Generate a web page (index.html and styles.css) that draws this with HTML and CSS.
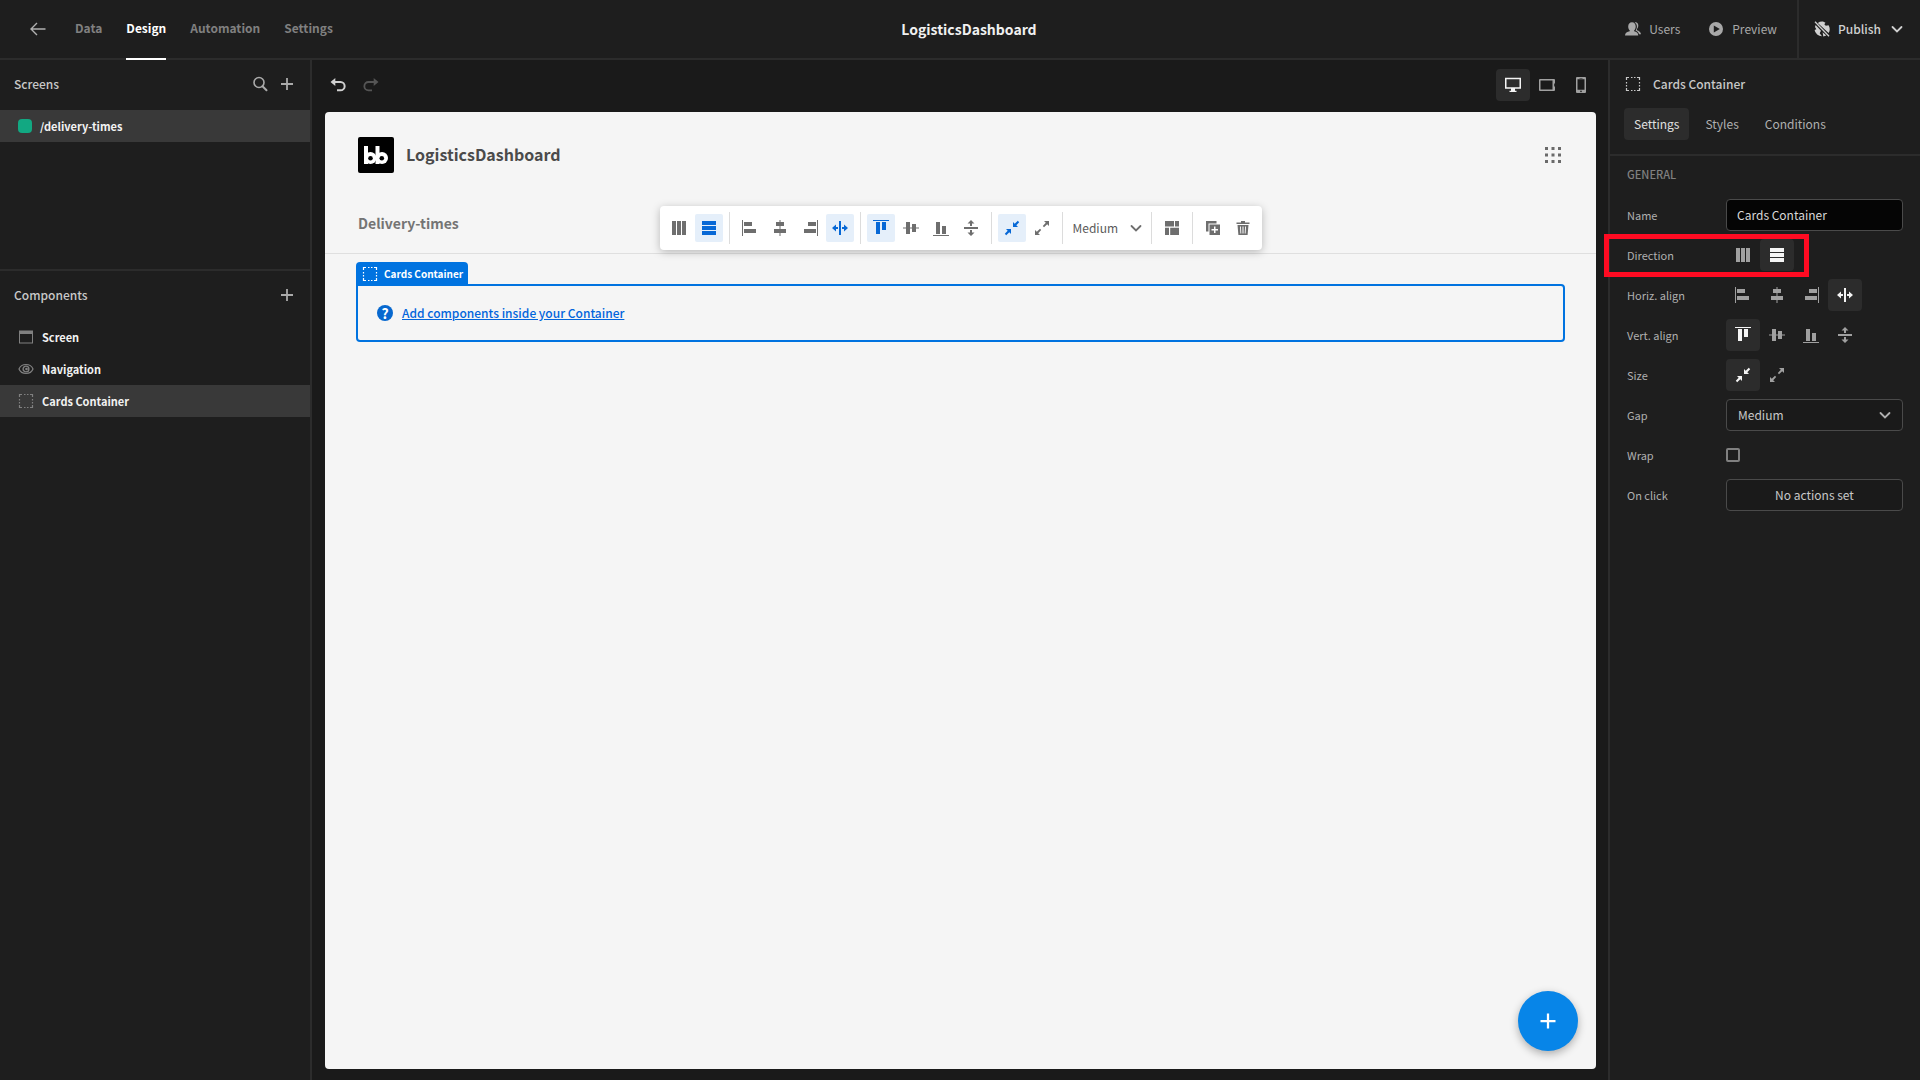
FILE: index.html
```html
<!DOCTYPE html>
<html lang="en">
<head>
<meta charset="utf-8">
<title>LogisticsDashboard</title>
<link rel="stylesheet" href="styles.css">
</head>
<body>
<svg class="sprite" aria-hidden="true">
  <symbol id="i-back" viewBox="0 0 16 16"><path d="M15.500 8H1.500M7 2 1 8l6 6" fill="none" stroke="currentColor" stroke-width="1.400"/></symbol>
  <symbol id="i-search" viewBox="0 0 16 16"><circle cx="7" cy="6.500" r="5" fill="none" stroke="currentColor" stroke-width="1.600"/><path d="m10.500 10.300 4 4" stroke="currentColor" stroke-width="2" stroke-linecap="round"/></symbol>
  <symbol id="i-plus" viewBox="0 0 16 16"><path d="M8 2v12M2 8h12" stroke="currentColor" stroke-width="1.800"/></symbol>
  <symbol id="i-screen" viewBox="0 0 16 16"><path d="M1 1.500h14v13H1zM2 5v8.500h12V5z" fill="currentColor" fill-rule="evenodd"/></symbol>
  <symbol id="i-eye" viewBox="0 0 16 16"><path d="M8 3.500C4.500 3.500 1.800 6 1 8c.8 2 3.500 4.500 7 4.500S14.200 10 15 8c-.8-2-3.500-4.500-7-4.500z" fill="none" stroke="currentColor" stroke-width="1.200"/><circle cx="8" cy="8" r="2.900" fill="none" stroke="currentColor" stroke-width="1.400"/><circle cx="8.500" cy="8" r="1.300" fill="currentColor"/></symbol>
  <symbol id="i-select" viewBox="0 0 16 16"><path d="M1.500 4V1.500H4M6 1.500h1.500m1.500 0h1.500M12 1.500h2.500V4m0 2v1.500m0 1.500v1.500m0 1.500v2.500H12m-1.500 0H9m-1.500 0H6m-2 0H1.500V12m0-1.500V9m0-1.500V6" fill="none" stroke="currentColor" stroke-width="1.200"/></symbol>
  <symbol id="i-undo" viewBox="0 0 16 16"><path d="M3 5h7.500a4 4 0 0 1 0 8.300H7" fill="none" stroke="currentColor" stroke-width="2"/><path d="M.5 5 5.300 1v8z" fill="currentColor"/></symbol>
  <symbol id="i-redo" viewBox="0 0 16 16"><path d="M13 5H5.500a4 4 0 0 0 0 8.300H9" fill="none" stroke="currentColor" stroke-width="1.800"/><path d="M15.500 5 10.700 1v8z" fill="currentColor"/></symbol>
  <symbol id="i-desktop" viewBox="0 0 16 16"><path d="M0 .8h16v11h-6v2h1.500V15h-7v-1.200H6v-2H0zM1.500 2.300v8h13v-8z" fill="currentColor" fill-rule="evenodd"/></symbol>
  <symbol id="i-tablet" viewBox="0 0 16 16"><path d="M1 2h14a1 1 0 0 1 1 1v3.500h-.8v3H16V13a1 1 0 0 1-1 1H1a1 1 0 0 1-1-1V3a1 1 0 0 1 1-1zm.5 1.500v9h12v-9z" fill="currentColor" fill-rule="evenodd"/></symbol>
  <symbol id="i-phone" viewBox="0 0 16 16"><path d="M4 0h8a1 1 0 0 1 1 1v14a1 1 0 0 1-1 1H4a1 1 0 0 1-1-1V1a1 1 0 0 1 1-1zm.5 2.300v10.400h7V2.300zM6.500 1v.6h3V1zM8 13.600a.8.8 0 1 0 0 1.600.8.8 0 0 0 0-1.600z" fill="currentColor" fill-rule="evenodd"/></symbol>
  <symbol id="i-users" viewBox="0 0 16 16"><path d="M9.600 1.500c2.200-.8 3.700.8 3.700 3 0 1.500-.6 2.600-1.300 3.400v1.300c2 .6 3.800 1.800 4 4h-2c-.4-1.800-1.600-2.900-3.400-3.700.7-1.100 1.300-2.200 1.300-4C11.900 3.700 11 2.300 9.600 1.500z" fill="currentColor"/><path d="M7 1.300c2.300 0 3.700 1.800 3.700 4.100 0 1.700-.6 3-1.500 3.900v1c2.100.6 4.100 1.600 4.100 4.200H0c0-2.600 2.300-3.600 4.700-4.200v-1c-.9-.9-1.500-2.200-1.500-3.900C3.200 3.100 4.700 1.300 7 1.300z" fill="currentColor"/></symbol>
  <symbol id="i-play" viewBox="0 0 16 16"><path d="M8 1a7 7 0 1 0 0 14A7 7 0 0 0 8 1zM5.800 4.400 11.800 8l-6 3.600z" fill="currentColor" fill-rule="evenodd"/></symbol>
  <symbol id="i-unpublished" viewBox="0 0 16 16"><path d="M3.800 1.900A7.500 7.500 0 0 1 9 .6l2.500 1.200-1.200 1.500 1.500 1.500 2.800-.5A7.500 7.500 0 0 1 14.600 12z" fill="currentColor"/><path d="M1.600 3.900 7 9.700l-1.300 2.500L8 15.300A7.500 7.500 0 0 1 .6 9l1.800-.7L1 6zM8.600 11.300l3.700 3.200a7 7 0 0 1-3 .9z" fill="currentColor"/><path d="m1 .8 14 14.500" stroke="currentColor" stroke-width="1.300"/></symbol>
  <symbol id="i-chevron" viewBox="0 0 16 16"><path d="m3.500 6 4.500 4.500L12.500 6" fill="none" stroke="currentColor" stroke-width="1.800" stroke-linecap="round"/></symbol>
  <symbol id="i-columns" viewBox="0 0 16 16"><path d="M1 1h4v14H1zM6 1h4v14H6zM11 1h4v14h-4z" fill="currentColor"/></symbol>
  <symbol id="i-rows" viewBox="0 0 16 16"><path d="M1 1h14v4H1zM1 6h14v4H1zM1 11h14v4H1z" fill="currentColor"/></symbol>
  <symbol id="i-left" viewBox="0 0 16 16"><path d="M0 0h1v16H0zM2 2h8v4H2zM2 9h12v4H2z" fill="currentColor"/></symbol>
  <symbol id="i-center" viewBox="0 0 16 16"><path d="M7.500 0h1v16h-1zM4 2h8v4H4zM2 9h12v4H2z" fill="currentColor"/></symbol>
  <symbol id="i-right" viewBox="0 0 16 16"><path d="M15 0h1v16h-1zM6 2h8v4H6zM2 9h12v4H2z" fill="currentColor"/></symbol>
  <symbol id="i-stretch" viewBox="0 0 16 16"><path d="M7 1h2v14H7zM0 8l4-3.500V7h2v2H4v2.500zM16 8l-4-3.500V7h-2v2h2v2.500z" fill="currentColor"/></symbol>
  <symbol id="i-top" viewBox="0 0 16 16"><path d="M0 0h16v1H0zM3 2h4v12H3zM9 2h4v8H9z" fill="currentColor"/></symbol>
  <symbol id="i-middle" viewBox="0 0 16 16"><path d="M0 7.500h16v1H0zM3 2h4v12H3zM9 4h4v8H9z" fill="currentColor"/></symbol>
  <symbol id="i-bottom" viewBox="0 0 16 16"><path d="M0 15h16v1H0zM3 2h4v12H3zM9 6h4v8H9z" fill="currentColor"/></symbol>
  <symbol id="i-vstretch" viewBox="0 0 16 16"><path d="M1 7h14v2H1zM8 0l3.500 3.500H9V6H7V3.500H4.500zM8 16l3.500-3.500H9V10H7v2.500H4.500z" fill="currentColor"/></symbol>
  <symbol id="i-shrink" viewBox="0 0 16 16"><path d="M9 7V2l1.700 1.700L13.800.8l1.400 1.400-2.900 3.100L14 7zM7 9v5l-1.700-1.700-3.100 2.900-1.400-1.400 2.900-3.100L2 9z" fill="currentColor"/></symbol>
  <symbol id="i-grow" viewBox="0 0 16 16"><path d="M15 1v5l-1.800-1.800-3.200 3L8.800 6l3-3.200L10 1zM1 15v-5l1.800 1.800 3.200-3L7.200 10l-3 3.200L6 15z" fill="currentColor"/></symbol>
  <symbol id="i-layout" viewBox="0 0 16 16"><path d="M1 1h9v5.500H1zM11 1h4v5.500h-4zM1 7.800h4V15H1zM6.200 7.800H15V15H6.200z" fill="currentColor"/></symbol>
  <symbol id="i-duplicate" viewBox="0 0 16 16"><path d="M1 1h10.500v2.500h-8v8H1z" fill="currentColor"/><path d="M4.500 4.500H15V15H4.500zM9 6.500V9H6.500v1.500H9V13h1.500v-2.500H13V9h-2.500V6.500z" fill="currentColor" fill-rule="evenodd"/></symbol>
  <symbol id="i-trash" viewBox="0 0 16 16"><path d="M6 1h4v1.500h4.500V4h-13V2.500H6z" fill="currentColor"/><path d="M2.500 5h11l-.9 10H3.400zM5 6.500l.4 7h.9l-.4-7zM7.500 6.500v7h1v-7zM10.100 6.500l-.4 7h.9l.4-7z" fill="currentColor" fill-rule="evenodd"/></symbol>
  <symbol id="i-apps" viewBox="0 0 16 16"><path d="M0 0h3v3H0zM6.500 0h3v3h-3zM13 0h3v3h-3zM0 6.500h3v3H0zM6.500 6.500h3v3h-3zM13 6.500h3v3h-3zM0 13h3v3H0zM6.500 13h3v3h-3zM13 13h3v3h-3z" fill="currentColor"/></symbol>
</svg>

<header class="topbar">
  <nav class="topbar-nav">
    <a class="back" href="#" aria-label="Back"><svg class="icon"><use href="#i-back"/></svg></a>
    <a class="nav-link" href="#">Data</a>
    <a class="nav-link is-active" href="#">Design</a>
    <a class="nav-link" href="#">Automation</a>
    <a class="nav-link" href="#">Settings</a>
  </nav>
  <h1 class="topbar-title">LogisticsDashboard</h1>
  <div class="topbar-actions">
    <button class="top-action"><svg class="icon"><use href="#i-users"/></svg>Users</button>
    <button class="top-action"><svg class="icon"><use href="#i-play"/></svg>Preview</button>
    <button class="publish"><svg class="icon"><use href="#i-unpublished"/></svg>Publish<svg class="icon publish-chevron"><use href="#i-chevron"/></svg></button>
  </div>
</header>

<div class="workspace">
  <aside class="sidebar">
    <section class="side-section screens">
      <div class="side-head">
        <h2>Screens</h2>
        <button class="icon-button" aria-label="Search"><svg class="icon"><use href="#i-search"/></svg></button>
        <button class="icon-button" aria-label="Add screen"><svg class="icon"><use href="#i-plus"/></svg></button>
      </div>
      <a class="side-item screen-item is-selected" href="#"><span class="swatch"></span>/delivery-times</a>
    </section>
    <section class="side-section">
      <div class="side-head">
        <h2>Components</h2>
        <button class="icon-button" aria-label="Add component"><svg class="icon"><use href="#i-plus"/></svg></button>
      </div>
      <a class="side-item" href="#"><svg class="icon"><use href="#i-screen"/></svg>Screen</a>
      <a class="side-item" href="#"><svg class="icon"><use href="#i-eye"/></svg>Navigation</a>
      <a class="side-item is-selected" href="#"><svg class="icon"><use href="#i-select"/></svg>Cards Container</a>
    </section>
  </aside>

  <main class="stage">
    <div class="stage-bar">
      <div class="history">
        <button class="icon-button" aria-label="Undo"><svg class="icon"><use href="#i-undo"/></svg></button>
        <button class="icon-button is-dim" aria-label="Redo"><svg class="icon"><use href="#i-redo"/></svg></button>
      </div>
      <div class="toggle-group">
        <button class="toggle is-active" aria-label="Desktop"><svg class="icon"><use href="#i-desktop"/></svg></button>
        <button class="toggle" aria-label="Tablet"><svg class="icon"><use href="#i-tablet"/></svg></button>
        <button class="toggle" aria-label="Mobile"><svg class="icon"><use href="#i-phone"/></svg></button>
      </div>
    </div>

    <div class="app">
      <div class="app-header">
        <svg class="app-logo" viewBox="0 0 36 36" role="img" aria-label="Budibase">
          <rect width="36" height="36" rx="2" fill="#000"/>
          <g fill="#fff"><rect x="6" y="9" width="4" height="18"/><circle cx="12.500" cy="21" r="6"/><rect x="17.500" y="9" width="4" height="18"/><circle cx="24" cy="21" r="6"/></g>
          <g fill="#000"><circle cx="12.500" cy="21.300" r="2.300"/><circle cx="23.800" cy="21.300" r="2.300"/></g>
        </svg>
        <h2 class="app-title">LogisticsDashboard</h2>
        <button class="apps-button" aria-label="Apps"><svg class="icon"><use href="#i-apps"/></svg></button>
      </div>
      <div class="app-nav"><a href="#">Delivery-times</a></div>
      <div class="app-body">
        <div class="component">
          <span class="component-tag"><svg class="icon"><use href="#i-select"/></svg>Cards Container</span>
          <span class="help">?</span>
          <a href="#">Add components inside your Container</a>
        </div>
      </div>

      <div class="float-bar">
        <button class="tool" aria-label="Column"><svg class="icon"><use href="#i-columns"/></svg></button>
        <button class="tool is-active" aria-label="Row"><svg class="icon"><use href="#i-rows"/></svg></button>
        <span class="divider"></span>
        <button class="tool" aria-label="Align left"><svg class="icon"><use href="#i-left"/></svg></button>
        <button class="tool" aria-label="Align center"><svg class="icon"><use href="#i-center"/></svg></button>
        <button class="tool" aria-label="Align right"><svg class="icon"><use href="#i-right"/></svg></button>
        <button class="tool is-active" aria-label="Stretch horizontally"><svg class="icon"><use href="#i-stretch"/></svg></button>
        <span class="divider"></span>
        <button class="tool is-active" aria-label="Align top"><svg class="icon"><use href="#i-top"/></svg></button>
        <button class="tool" aria-label="Align middle"><svg class="icon"><use href="#i-middle"/></svg></button>
        <button class="tool" aria-label="Align bottom"><svg class="icon"><use href="#i-bottom"/></svg></button>
        <button class="tool" aria-label="Stretch vertically"><svg class="icon"><use href="#i-vstretch"/></svg></button>
        <span class="divider"></span>
        <button class="tool is-active" aria-label="Shrink"><svg class="icon"><use href="#i-shrink"/></svg></button>
        <button class="tool" aria-label="Grow"><svg class="icon"><use href="#i-grow"/></svg></button>
        <span class="divider"></span>
        <div class="picker float-picker">
          <select aria-label="Gap"><option>Medium</option></select>
          <svg class="icon"><use href="#i-chevron"/></svg>
        </div>
        <span class="divider"></span>
        <button class="tool" aria-label="Layout"><svg class="icon"><use href="#i-layout"/></svg></button>
        <span class="divider"></span>
        <button class="tool" aria-label="Duplicate"><svg class="icon"><use href="#i-duplicate"/></svg></button>
        <button class="tool" aria-label="Delete"><svg class="icon"><use href="#i-trash"/></svg></button>
      </div>

      <button class="fab" aria-label="Add component"><svg class="icon"><use href="#i-plus"/></svg></button>
    </div>
  </main>

  <aside class="inspector">
    <div class="inspector-head"><svg class="icon"><use href="#i-select"/></svg><h2>Cards Container</h2></div>
    <div class="tabs">
      <button class="tab is-active">Settings</button>
      <button class="tab">Styles</button>
      <button class="tab">Conditions</button>
    </div>
    <form class="settings">
      <h3>GENERAL</h3>
      <div class="row"><label for="name">Name</label><input class="field name-field" id="name" type="text" value="Cards Container"></div>
      <div class="row is-highlighted"><span>Direction</span>
        <div class="toggle-group">
          <button type="button" class="toggle" aria-label="Column"><svg class="icon"><use href="#i-columns"/></svg></button>
          <button type="button" class="toggle is-active" aria-label="Row"><svg class="icon"><use href="#i-rows"/></svg></button>
        </div>
      </div>
      <div class="row"><span>Horiz. align</span>
        <div class="toggle-group">
          <button type="button" class="toggle" aria-label="Left"><svg class="icon"><use href="#i-left"/></svg></button>
          <button type="button" class="toggle" aria-label="Center"><svg class="icon"><use href="#i-center"/></svg></button>
          <button type="button" class="toggle" aria-label="Right"><svg class="icon"><use href="#i-right"/></svg></button>
          <button type="button" class="toggle is-active" aria-label="Stretch"><svg class="icon"><use href="#i-stretch"/></svg></button>
        </div>
      </div>
      <div class="row"><span>Vert. align</span>
        <div class="toggle-group">
          <button type="button" class="toggle is-active" aria-label="Top"><svg class="icon"><use href="#i-top"/></svg></button>
          <button type="button" class="toggle" aria-label="Middle"><svg class="icon"><use href="#i-middle"/></svg></button>
          <button type="button" class="toggle" aria-label="Bottom"><svg class="icon"><use href="#i-bottom"/></svg></button>
          <button type="button" class="toggle" aria-label="Stretch"><svg class="icon"><use href="#i-vstretch"/></svg></button>
        </div>
      </div>
      <div class="row"><span>Size</span>
        <div class="toggle-group">
          <button type="button" class="toggle is-active" aria-label="Shrink"><svg class="icon"><use href="#i-shrink"/></svg></button>
          <button type="button" class="toggle" aria-label="Grow"><svg class="icon"><use href="#i-grow"/></svg></button>
        </div>
      </div>
      <div class="row"><label for="gap">Gap</label>
        <div class="picker">
          <select class="field" id="gap"><option>Medium</option></select>
          <svg class="icon"><use href="#i-chevron"/></svg>
        </div>
      </div>
      <div class="row"><label for="wrap">Wrap</label><input class="checkbox" id="wrap" type="checkbox"></div>
      <div class="row"><span>On click</span><button type="button" class="field">No actions set</button></div>
    </form>
  </aside>
</div>
</body>
</html>
```
FILE: styles.css
```css
*, *::after { box-sizing: border-box; }

:root {
  --panel: #1e1e1e;
  --stage: #1a1a1a;
  --line: #2c2c2c;
  --selected: #393939;
  --text: #c8c8c8;
  --muted: #a2a2a2;
  --blue: #0265dc;
}

body {
  margin: 0;
  min-height: 100vh;
  display: flex;
  flex-direction: column;
  background: var(--panel);
  color: var(--text);
  font: 400 12px/20px "Noto Sans CJK SC", sans-serif;
}

h1, h2, h3 { margin: 0; font-size: inherit; font-weight: inherit; }
a { color: inherit; text-decoration: none; }
button, input, select { font: inherit; color: inherit; margin: 0; }
button { padding: 0; border: 0; background: none; }

.sprite { display: none; }
.icon { width: 16px; height: 16px; flex: none; display: block; }

.icon-button {
  display: grid;
  place-items: center;
  color: #aaa;
}

/* Top bar */
.topbar {
  display: grid;
  grid-template-columns: 1fr auto 1fr;
  align-items: stretch;
  height: 60px;
  padding-left: 18px;
  border-bottom: 2px solid var(--line);
}
.topbar-nav { display: flex; gap: 24px; padding-left: 12px; color: #808080; font-weight: 700; }
.back { display: flex; align-items: center; margin-right: 5px; color: #b0b0b0; }
.nav-link {
  display: flex;
  align-items: center;
  margin-bottom: -2px;
  padding-bottom: 2px;
  border-bottom: 2px solid transparent;
}
.nav-link.is-active { color: #fff; border-bottom-color: #fff; }
.topbar-title { display: flex; align-items: center; font-size: 14px; font-weight: 700; color: #f0f0f0; }
.topbar-actions { display: flex; justify-content: flex-end; }
.top-action { display: flex; align-items: center; gap: 8px; margin-right: 28px; color: #a8a8a8; }
.top-action + .top-action { margin-right: 20px; }
.publish {
  display: flex;
  align-items: center;
  gap: 8px;
  padding: 0 15px;
  border-left: 2px solid var(--line);
  font-weight: 500;
  color: #d0d0d0;
}

/* Columns */
.workspace { flex: 1; display: grid; grid-template-columns: 312px 1fr 312px; }

/* Left sidebar */
.sidebar { border-right: 2px solid var(--line); }
.screens { min-height: 211px; border-bottom: 2px solid var(--line); }
.side-head { display: flex; align-items: center; gap: 11px; height: 48px; margin-bottom: 2px; padding: 0 15px 0 14px; }
.side-head h2 { flex: 1; font-weight: 500; }
.side-item {
  display: flex;
  align-items: center;
  gap: 8px;
  height: 32px;
  padding-left: 18px;
  font-size: 11px;
  font-weight: 700;
  color: #f2f2f2;
}
.side-item.is-selected { background: var(--selected); }
.side-item .icon { color: #808080; }
.swatch { width: 14px; height: 14px; border-radius: 4px; background: #12a882; }

/* Stage */
.stage {
  display: flex;
  flex-direction: column;
  padding: 0 12px 11px 13px;
  background: var(--stage);
}
.stage-bar { display: flex; justify-content: space-between; align-items: center; height: 50px; margin: 0 -2px 2px 0; }
.history { display: flex; gap: 17px; padding-left: 5px; }
.history .icon-button { color: #d0d0d0; }
.history .is-dim { color: #555; }

.toggle-group { display: flex; }
.toggle {
  display: grid;
  place-items: center;
  width: 34px;
  height: 32px;
  border-radius: 4px;
  color: #a0a0a0;
}
.toggle.is-active { background: var(--line); color: #f4f4f4; }

/* Previewed app */
.app {
  position: relative;
  flex: 1;
  border-radius: 4px;
  background: #f5f5f5;
  color: #4b4b4b;
}
.app-header { display: flex; align-items: center; gap: 12px; padding: 25px 35px 0 33px; }
.app-logo { width: 36px; height: 36px; }
.app-title { flex: 1; padding-bottom: 2px; font-size: 16px; line-height: 24px; font-weight: 700; }
.apps-button { color: #6a6a6a; }
.app-nav {
  padding: 38px 33px 18px;
  border-bottom: 1px solid #dfdfdf;
  font-size: 14px;
  line-height: 24px;
  font-weight: 700;
  color: #747474;
}
.app-body { padding: 30px 31px; }
.component {
  position: relative;
  display: flex;
  align-items: center;
  gap: 9px;
  height: 58px;
  padding: 0 19px;
  border: 2px solid #0073e0;
  border-radius: 0 4px 4px 4px;
  color: var(--blue);
}
.component a { font-weight: 500; text-decoration: underline; }
.component-tag {
  position: absolute;
  left: -2px;
  bottom: 100%;
  display: flex;
  align-items: center;
  gap: 6px;
  height: 24px;
  padding: 0 5px 0 6px;
  border-radius: 4px 4px 0 0;
  background: #0073e0;
  color: #fff;
  font-size: 10px;
  font-weight: 700;
}
.help {
  display: grid;
  place-items: center;
  width: 16px;
  height: 16px;
  border-radius: 50%;
  background: #0768cf;
  color: #fff;
  font-size: 14px;
  font-weight: 700;
  line-height: 16px;
}

.float-bar {
  position: absolute;
  top: 94px;
  left: 50%;
  transform: translateX(-50%);
  display: flex;
  align-items: center;
  gap: 2px;
  height: 44px;
  padding: 0 5px;
  border-radius: 4px;
  background: #fff;
  box-shadow: 0 2px 8px rgba(0, 0, 0, .25);
  color: #6e6e6e;
}
.tool { display: grid; place-items: center; width: 28px; height: 28px; border-radius: 2px; }
.tool.is-active { background: #e5effa; color: #0768d6; }
.divider { width: 1px; height: 32px; margin: 0 4px; background: #dcdcdc; }

.picker { display: grid; align-items: center; }
.picker > * { grid-area: 1 / 1; }
.picker .icon { justify-self: end; margin-right: 10px; pointer-events: none; }
.picker select { appearance: none; width: 100%; outline: 0; }
.float-picker { width: 76px; }
.float-picker select { padding: 0 4px; border: 0; background: none; color: #5a5a5a; }
.float-picker .icon { margin-right: 1px; }

.fab {
  position: absolute;
  right: 18px;
  bottom: 18px;
  display: grid;
  place-items: center;
  width: 60px;
  height: 60px;
  border-radius: 50%;
  background: #0785e8;
  color: #fff;
  box-shadow: 0 3px 8px rgba(0, 0, 0, .3);
}
.fab .icon { width: 20px; height: 20px; }

/* Inspector */
.inspector { border-left: 2px solid var(--line); }
.inspector-head { display: flex; align-items: center; gap: 12px; height: 48px; padding-left: 15px; font-weight: 500; }
.tabs { display: flex; gap: 6px; padding: 0 14px 14px; border-bottom: 2px solid var(--line); }
.tab { height: 32px; padding: 0 10px; border-radius: 4px; color: #b0b0b0; }
.tab.is-active { background: var(--line); color: #e0e0e0; }

.settings { display: grid; gap: 8px; padding: 9px 17px 9px 17px; }
.settings h3 { height: 26px; font-size: 11px; line-height: 18px; font-weight: 500; color: #808080; }
.row {
  position: relative;
  display: grid;
  grid-template-columns: 99px 1fr;
  align-items: center;
  height: 32px;
  font-size: 11px;
  color: #b0b0b0;
}
.is-highlighted::after {
  content: "";
  position: absolute;
  inset: -5px auto -6px -23px;
  width: 205px;
  border: 5px solid #ff0b22;
  pointer-events: none;
}
.field {
  height: 32px;
  width: 100%;
  padding: 0 11px;
  border: 1px solid #4a4a4a;
  border-radius: 4px;
  background: var(--stage);
  color: var(--text);
  font-size: 12px;
}
.name-field { padding: 0 10px 2px; background: #050505; color: #d8d8d8; }
.checkbox {
  appearance: none;
  width: 14px;
  height: 14px;
  border: 2px solid #808080;
  border-radius: 2px;
}
```
